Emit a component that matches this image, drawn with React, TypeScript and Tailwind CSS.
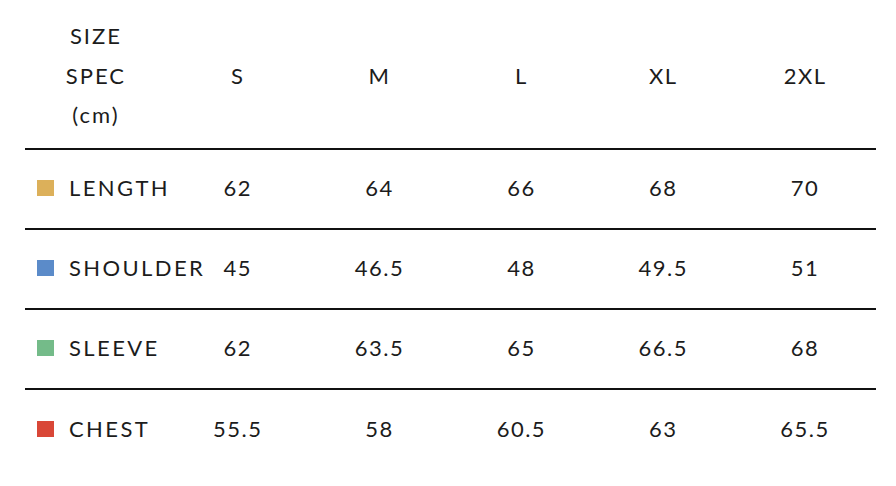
import React from "react";

const sizes = ["S", "M", "L", "XL", "2XL"];
const rows = [
  { label: "LENGTH", color: "bg-[#dcb05a]", values: ["62", "64", "66", "68", "70"] },
  { label: "SHOULDER", color: "bg-[#5b8bc9]", values: ["45", "46.5", "48", "49.5", "51"] },
  { label: "SLEEVE", color: "bg-[#74bb89]", values: ["62", "63.5", "65", "66.5", "68"] },
  { label: "CHEST", color: "bg-[#d94737]", values: ["55.5", "58", "60.5", "63", "65.5"] },
];

export default function App() {
  return (
    <div
      className="w-[896px] h-[486px] bg-white text-[#1c1c1c] px-[25px] pt-[16px]"
      style={{ fontFamily: "Lato, 'Noto Sans', sans-serif" }}
    >
      <div className="w-[851px]">
        <div className="grid grid-cols-6 h-[134px] pb-[13px] border-b-2 border-[#111]">
          <div className="flex flex-col items-center text-[22px] leading-[39.5px] tracking-[2px]">
            <span>SIZE</span>
            <span>SPEC</span>
            <span>(cm)</span>
          </div>
          {sizes.map((s) => (
            <div key={s} className="flex items-center justify-center text-[22px] tracking-[1.5px] pb-[1px]">
              {s}
            </div>
          ))}
        </div>
        {rows.map((r, i) => (
          <div
            key={r.label}
            className={`grid grid-cols-6 h-[80px] items-center pb-[3px] ${i < rows.length - 1 ? "border-b-2 border-[#111]" : ""}`}
          >
            <div className="flex items-center pl-[12px] whitespace-nowrap">
              <span className={`w-[17px] h-[16px] ${r.color} mr-[15px] shrink-0 mt-[1px]`} />
              <span className="text-[22px] tracking-[2.4px]">{r.label}</span>
            </div>
            {r.values.map((v, j) => (
              <div key={j} className="text-center text-[22px] tracking-[1.5px]">
                {v}
              </div>
            ))}
          </div>
        ))}
      </div>
    </div>
  );
}
